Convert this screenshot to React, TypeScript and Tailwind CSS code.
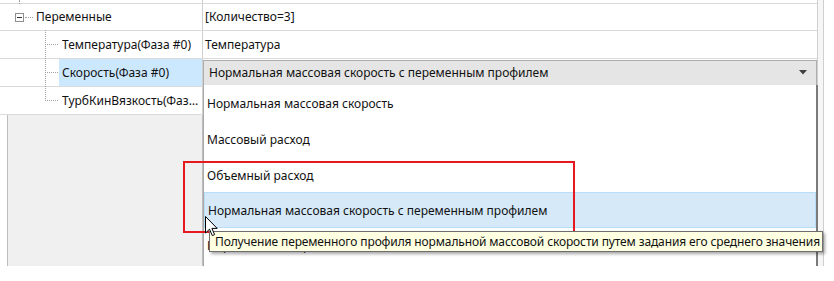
import React from 'react';

const FONT = { fontFamily: '"Noto Sans", "Open Sans", sans-serif' };

const options = [
  'Нормальная массовая скорость',
  'Массовый расход',
  'Объемный расход',
  'Нормальная массовая скорость с переменным профилем',
  'Нормальная скорость',
];

function TreeBranch({ last }: { last?: boolean }) {
  return (
    <div className="relative h-full w-[59px] shrink-0">
      <div className={`absolute left-[45px] top-[-1px] border-l border-dotted border-[#a0a0a0] ${last ? 'h-[15px]' : 'h-[29px]'}`} />
      <div className="absolute left-[47px] top-[13px] w-[11px] border-t border-dotted border-[#a0a0a0]" />
    </div>
  );
}

function ChildRow({ label, value, selected, last, children }: { label: string; value?: string; selected?: boolean; last?: boolean; children?: React.ReactNode }) {
  return (
    <div className="flex h-[28px] border-b border-[#dadada]">
      <div className="flex w-[203px] shrink-0 border-r border-[#cfcfcf]">
        <TreeBranch last={last} />
        <div className={`flex min-w-0 flex-1 items-center pl-[3px] pr-[2px] ${selected ? 'bg-[#cce8ff]' : ''}`}>
          <span className="min-w-0 truncate">{label}</span>
        </div>
      </div>
      <div className="flex flex-1 items-center">
        {children ?? <span className="pl-[2px]">{value}</span>}
      </div>
    </div>
  );
}

export default function App() {
  return (
    <div className="relative h-[281px] w-[834px] overflow-hidden bg-white text-[12px] text-[#111]" style={FONT}>
      <div className="flex h-[266px]">
        <div className="flex w-[817px] flex-col">
          {/* tail of the row above */}
          <div className="flex h-[4px] border-b border-[#dadada]">
            <div className="relative w-[203px] border-r border-[#cfcfcf]">
              <div className="absolute left-[19px] top-0 h-[4px] border-l border-dotted border-[#a0a0a0]" />
            </div>
          </div>

          <div className="flex h-[27px] border-b border-[#dadada]">
            <div className="flex w-[203px] shrink-0 items-center border-r border-[#cfcfcf]">
              <div className="ml-[15px] flex h-[9px] w-[9px] items-center justify-center border border-[#8f8f8f] bg-white">
                <div className="h-px w-[5px] bg-[#333]" />
              </div>
              <div className="ml-[1px] w-[8px] border-t border-dotted border-[#a0a0a0]" />
              <span className="ml-[3px]">Переменные</span>
            </div>
            <div className="flex flex-1 items-center pl-[2px]">[Количество=3]</div>
          </div>

          <ChildRow label="Температура(Фаза #0)" value="Температура" />
          <ChildRow label="Скорость(Фаза #0)" selected>
            <div className="flex h-[26px] flex-1 items-center justify-between border border-[#adadad] bg-[#e5e5e5] pl-[5px] pr-[9px]">
              <span>Нормальная массовая скорость с переменным профилем</span>
              <svg width="8" height="5" viewBox="0 0 8 5">
                <path d="M0 0h8L4 4.5z" fill="#404040" />
              </svg>
            </div>
          </ChildRow>
          <ChildRow label="ТурбКинВязкость(Фаза #0)" last />

          <div className="flex flex-1">
            <div className="ml-[7px] w-[196px] border-l border-r border-[#bdbdbd] bg-[#f0f0f0]" />
            <div className="flex-1" />
          </div>
        </div>
        <div className="w-[7px] border-l border-r border-[#cfcfcf] bg-[#f6f6f6]" />
      </div>

      {/* open dropdown */}
      <div className="absolute left-[203px] top-[85px] flex h-[181px] w-[615px] flex-col border-l border-r-2 border-l-[#a9a9a9] border-r-[#7a7a7a] bg-white pt-[1px]">
        {options.map((o, i) => (
          <div key={o} className={`flex h-[36px] shrink-0 items-center pl-[3px] ${i === 3 ? 'mt-[-2px] h-[35px] border border-[#b9dcf7] bg-[#d5e9f9] pl-[2px] pt-[2px]' : ''}`}>
            {o}
          </div>
        ))}
      </div>

      {/* red highlight frame */}
      <div className="absolute left-[183px] top-[161px] h-[72px] w-[392px] border-2 border-[#e5191f]" />

      {/* tooltip */}
      <div className="absolute left-[209px] top-[231px] flex h-[21px] w-[614px] items-center whitespace-nowrap border border-[#6e6e6e] bg-[#ffffe1] pl-[5px] tracking-[-0.13px] shadow-[2px_2px_3px_rgba(0,0,0,0.35)]">
        Получение переменного профиля нормальной массовой скорости путем задания его среднего значения
      </div>

      {/* mouse cursor */}
      <svg className="absolute left-[205px] top-[216px]" width="13" height="21" viewBox="0 0 13 21">
        <path d="M0.5 0.5V17L4.5 13.2L7.3 19.6L9.6 18.6L6.9 12.4H12.2Z" fill="#fff" stroke="#000" strokeWidth="1" strokeLinejoin="miter" />
      </svg>
    </div>
  );
}
